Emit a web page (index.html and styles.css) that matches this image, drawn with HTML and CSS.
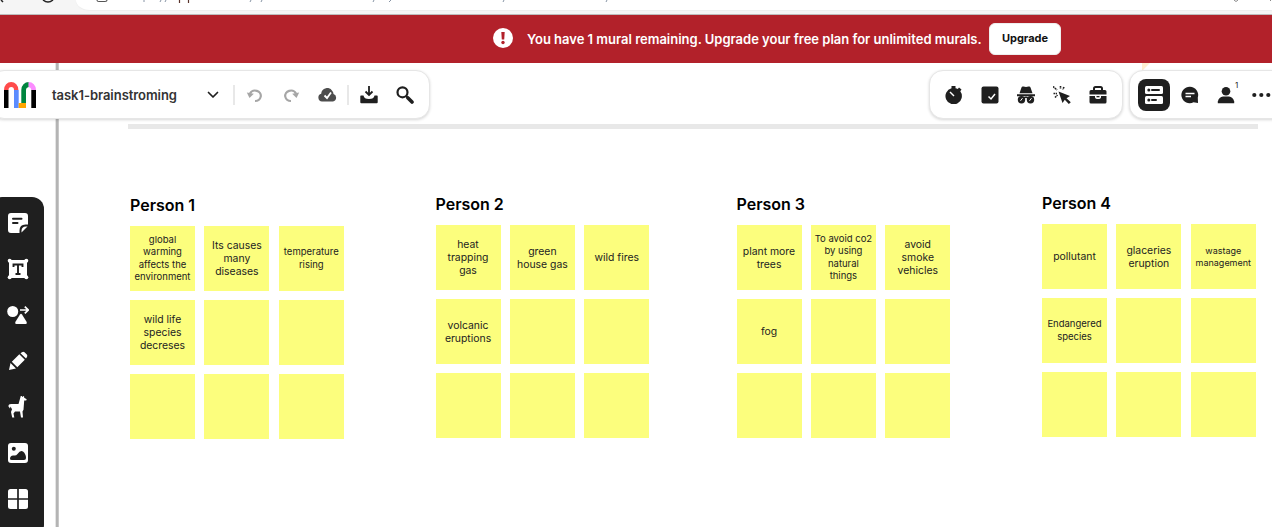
FILE: index.html
```html
<!DOCTYPE html>
<html lang="en">
<head>
<meta charset="utf-8">
<title>task1-brainstroming</title>
<link rel="stylesheet" href="styles.css">
</head>
<body>
<div class="app">
  <header class="browser">
    <div class="address"></div>
    <svg class="browser-marks" width="1272" height="8" viewBox="0 0 1272 8" fill="none">
      <path d="M1 0l2 2M43 0q5 4 10 0" stroke="#222" stroke-width="1.5"/>
      <path d="M97 0q0 1.500 2 1.500h6q2 0 2-1.500" stroke="#555" stroke-width="1.200"/>
      <path d="M144 0v2M161 0l-1 2M166 0l-1 2M251 0l-1 2M262 0l-1 2M374 0l-1 2M391 0l-2 2M504 0l-1 2M607 0l-1 2" stroke="#8794a5"/>
      <path d="M179.500 0v3M188.500 0v3" stroke="#5a342c" stroke-width="1.200"/>
      <path d="M1234 0l2 1.500 2-1.500M1270.500 0v1" stroke="#888"/>
    </svg>
  </header>

  <div class="banner">
    <svg class="alert" width="20" height="20" viewBox="0 0 20 20"><circle cx="10" cy="10" r="10" fill="#fff"/><path d="M8.300 4h3.400l-.5 7.500H8.800z" fill="#b2212a"/><circle cx="10" cy="14.500" r="1.700" fill="#b2212a"/></svg>
    <span class="banner-text">You have 1 mural remaining. Upgrade your free plan for unlimited murals.</span>
    <button class="upgrade">Upgrade</button>
  </div>

  <main class="canvas">
    <div class="frame-edge"></div>
    <div class="flag"></div>
    <div class="rule"></div>

    <section class="group g1">
      <h2>Person 1</h2>
      <div class="notes">
        <div class="note small">global<br>warming<br>affects the<br>environment</div>
        <div class="note">Its causes<br>many<br>diseases</div>
        <div class="note small">temperature<br>rising</div>
        <div class="note">wild life<br>species<br>decreses</div>
        <div class="note"></div><div class="note"></div><div class="note"></div><div class="note"></div><div class="note"></div>
      </div>
    </section>
    <section class="group g2">
      <h2>Person 2</h2>
      <div class="notes">
        <div class="note">heat<br>trapping<br>gas</div>
        <div class="note">green<br>house gas</div>
        <div class="note">wild fires</div>
        <div class="note">volcanic<br>eruptions</div>
        <div class="note"></div><div class="note"></div><div class="note"></div><div class="note"></div><div class="note"></div>
      </div>
    </section>
    <section class="group g3">
      <h2>Person 3</h2>
      <div class="notes">
        <div class="note">plant more<br>trees</div>
        <div class="note small">To avoid co2<br>by using<br>natural<br>things</div>
        <div class="note">avoid<br>smoke<br>vehicles</div>
        <div class="note">fog</div>
        <div class="note"></div><div class="note"></div><div class="note"></div><div class="note"></div><div class="note"></div>
      </div>
    </section>
    <section class="group g4">
      <h2>Person 4</h2>
      <div class="notes">
        <div class="note">pollutant</div>
        <div class="note">glaceries<br>eruption</div>
        <div class="note tiny">wastage<br>management</div>
        <div class="note small">Endangered<br>species</div>
        <div class="note"></div><div class="note"></div><div class="note"></div><div class="note"></div><div class="note"></div>
      </div>
    </section>

    <div class="panel panel-file">
      <svg class="logo" width="32" height="26" viewBox="0 0 32 26">
        <path d="M0 8h4.500v18H0zM27.300 8H32v18h-4.700z" fill="#000"/>
        <path d="M0 8a7.200 8 0 0 1 14.400 0H10a2.700 3 0 0 0-5.500 0z" fill="#ff4b4b"/>
        <path d="M10 8h4.700v18H10z" fill="#5b8cff"/>
        <path d="M17.300 21V8a7.500 8 0 0 1 7.500-8v5Q22 5.500 22 8v13z" fill="#00853f"/>
        <path d="M24.600 0A7.400 8 0 0 1 32 8h-4.700q0-2.500-2.700-3z" fill="#fb8cff"/>
        <path d="M14.700 21H22v5h-7.300z" fill="#ffa600"/>
      </svg>
      <span class="title">task1-brainstroming</span>
      <svg class="chevron" width="12" height="8" viewBox="0 0 12 8" fill="none" stroke="#1f1f1f" stroke-width="1.700" stroke-linecap="round" stroke-linejoin="round"><path d="M1.500 1.500L6 6l4.500-4.500"/></svg>
      <i class="divider"></i>
      <svg class="undo" width="18" height="16" viewBox="0 0 18 16"><path d="M4 6.500a5.700 5.200 0 1 1 5 7.500" fill="none" stroke="#a6a6a6" stroke-width="2.200"/><path d="M.8 5.500l7 1.200L3.500 11z" fill="#a6a6a6"/></svg>
      <svg class="redo" width="18" height="16" viewBox="0 0 18 16"><path d="M14 6.500a5.700 5.200 0 1 0-5 7.500" fill="none" stroke="#a6a6a6" stroke-width="2.200"/><path d="M17.200 5.500l-7 1.200 4.300 4.300z" fill="#a6a6a6"/></svg>
      <svg class="cloud" width="19" height="14" viewBox="0 0 19 14"><path d="M4 13.500a4 4 0 0 1-.8-7.800A6 6 0 0 1 14.500 3.200a4.500 4.500 0 0 1 1 2.800 3.900 3.900 0 0 1-.5 7.500z" fill="#4d4d4d"/><path d="M6.500 7.500l2.500 2.500L13 4.500" fill="none" stroke="#fff" stroke-width="1.800"/></svg>
      <i class="divider"></i>
      <svg class="download" width="18" height="18" viewBox="0 0 18 18"><path d="M9 0v9M5.500 5.500L9 9l3.500-3.500" fill="none" stroke="#1f1f1f" stroke-width="1.800"/><path d="M1 9.500h2.500q.5 3.500 5.500 3.500t5.500-3.500H17q.7 0 .7.700v6.100q0 1-1 1H1.300q-1 0-1-1v-6.100q0-.7.700-.7z" fill="#1f1f1f"/></svg>
      <svg class="search" width="18" height="18" viewBox="0 0 18 18" fill="none" stroke="#1f1f1f"><circle cx="6.500" cy="6.300" r="5" stroke-width="2.200"/><path d="M10 10l2 2" stroke-width="2.200"/><path d="M12 12l4 4" stroke-width="3.600" stroke-linecap="round"/></svg>
    </div>

    <div class="panel panel-tools">
      <svg width="18" height="18" viewBox="0 0 18 18"><path d="M6.500 0h4v2.200q1.200.2 2.300.9L14 1.500l2.500 2-1.200 1.800A8.200 8.200 0 1 1 6.500 2.200z" fill="#1f1f1f"/><path d="M5 6l4 4" stroke="#fff" stroke-width="1.500"/></svg>
      <svg width="18" height="18" viewBox="0 0 18 18"><rect x=".5" y=".5" width="17" height="17" rx="2" fill="#1f1f1f"/><path d="M7.500 10.500L10 13l4-5" fill="none" stroke="#fff" stroke-width="1.500"/></svg>
      <svg width="18" height="18" viewBox="0 0 18 18"><path d="M2.500 7.200L4.500 1.500Q5 0 6.500.6 9 1.500 11.500.6 13 0 13.500 1.500l2 5.700zM0 8.300h18v1.900H0z" fill="#1f1f1f"/><circle cx="4.500" cy="13.700" r="3.700" fill="#1f1f1f"/><circle cx="13.500" cy="13.700" r="3.700" fill="#1f1f1f"/><path d="M7 12q2-1.500 4 0" fill="none" stroke="#1f1f1f" stroke-width="1.500"/><path d="M3.500 14.800l2-2.600M12.500 14.800l2-2.600" stroke="#fff"/></svg>
      <svg width="18" height="18" viewBox="0 0 18 18"><path d="M5.500 5.500L17 10l-3.500 2.200 4.300 4-2 1.800-4-4.300L9.500 17z" fill="#1f1f1f"/><path d="M0 .5L4 4M7.500 0v3M11 1L9.800 3.500M.5 7.500H4M2 11.500L4.500 9" stroke="#1f1f1f" stroke-width="1.600" stroke-dasharray="1.800 .6"/></svg>
      <svg width="18" height="18" viewBox="0 0 18 18"><path d="M5 5V2.500Q5 1 6.500 1h5Q13 1 13 2.500V5" fill="none" stroke="#1f1f1f" stroke-width="2"/><path d="M2 4h14q1.500 0 1.500 1.500V8.500H.5v-3Q.5 4 2 4zM.5 10H6v1q0 2 3 2t3-2v-1h5.500v6q0 1.500-1.500 1.500H2Q.5 17.500.5 16z" fill="#1f1f1f"/><path d="M7.500 10h3v1.300h-3z" fill="#1f1f1f"/></svg>
    </div>

    <div class="panel panel-people">
      <div class="active">
        <svg width="18" height="18" viewBox="0 0 18 18"><rect width="18" height="8" rx="1.500" fill="#fff"/><rect y="10" width="18" height="8" rx="1.500" fill="#fff"/><path d="M7 4h7M7 14h4" stroke="#1f1f1f" stroke-width="2" stroke-linecap="round"/><circle cx="3.800" cy="4" r="1.500" fill="#1f1f1f"/><circle cx="3.800" cy="14" r="1.500" fill="#1f1f1f"/></svg>
      </div>
      <svg width="18" height="18" viewBox="0 0 18 18"><path d="M9 .8a8.200 8.200 0 0 1 7.800 10.700l.2 5.500-4.500-.8A8.200 8.200 0 1 1 9 .8z" fill="#1f1f1f"/><path d="M4.500 7.500h9M4.500 10.500H10" stroke="#fff" stroke-width="1.500"/></svg>
      <div class="person">
        <svg width="18" height="18" viewBox="0 0 18 18"><circle cx="9" cy="5.300" r="4.300" fill="#1f1f1f"/><path d="M.8 17.200v-1.700Q2 11 6 10.500h6q4 .5 5.200 5v1.700z" fill="#1f1f1f"/></svg>
        <span class="count">1</span>
      </div>
      <svg class="more" width="19" height="18" viewBox="0 0 19 18" fill="#1f1f1f"><circle cx="2.300" cy="9" r="2.100"/><circle cx="9.300" cy="9" r="2.100"/><circle cx="16.300" cy="9" r="2.100"/></svg>
    </div>

    <nav class="sidebar">
      <svg width="22" height="22" viewBox="0 0 22 22"><path d="M4 1h14q3 0 3 3v8.500h-2.500q-6 0-6 6V21H4q-3 0-3-3V4q0-3 3-3z" fill="#fff"/><path d="M6 6.700h8.500M6 11h4.500" stroke="#1f1f1f" stroke-width="2" stroke-linecap="round"/><path d="M14.500 20.500v-1.500q0-4.500 4.500-4.500h1.500z" fill="#fff"/></svg>
      <svg width="22" height="22" viewBox="0 0 22 22"><path d="M2 2h18v18H2z" fill="#fff"/><g fill="#fff"><circle cx="2.700" cy="2.700" r="2"/><circle cx="19.300" cy="2.700" r="2"/><circle cx="2.700" cy="19.300" r="2"/><circle cx="19.300" cy="19.300" r="2"/></g><path d="M6.500 9V6.500h9V9M11 6.500v9.500M8.500 16h5" fill="none" stroke="#1f1f1f" stroke-width="1.900"/></svg>
      <svg width="22" height="22" viewBox="0 0 22 22"><circle cx="5.700" cy="7.500" r="5.500" fill="#fff"/><path d="M13 6h8M17.800 2.700L21.200 6l-3.400 3.300" fill="none" stroke="#fff" stroke-width="1.700"/><path d="M13 10.500q1-1.500 2 0l4.700 7.500q.7 2-1 2h-9.400q-1.700 0-1-2z" fill="#fff"/></svg>
      <svg width="22" height="22" viewBox="0 0 22 22" fill="#fff"><path d="M2 20l1.500-7 5.500 5.500zM4.800 11.800l7.500-7.500 5.500 5.500-7.500 7.500zM13.500 3.200q2.500-2.500 4-1l2.300 2.300q1.300 1.500-.8 4z"/></svg>
      <svg width="22" height="22" viewBox="0 1 22 24" preserveAspectRatio="none" fill="#fff"><path d="M14 0l1.500 2L17 .8l.2 2.200 2.500 1.500-.5 1.500h-2l-.7 10-1 2 .5 6.500h-2l-1-6.500H8l-1.500 2 .8 4.500H5.200L4 18.500l1-3-1.500-3-.5 2-1.500-2Q1 9.700 4 9.700h7.500L13 4z"/></svg>
      <svg width="22" height="22" viewBox="0 0 22 22"><rect x="1" y="1" width="20" height="20" rx="3" fill="#fff"/><circle cx="6.800" cy="6.800" r="2" fill="#1f1f1f"/><path d="M3 17q0-4 4-3.500 2 .5 3.500-1.500 3-4.500 5.500-2.500 3 2.500 3 6.500 0 2-2 2H5q-2 0-2-1z" fill="#1f1f1f"/></svg>
      <svg width="22" height="22" viewBox="0 0 22 22"><rect x="1" y="1" width="20" height="20" rx="2.500" fill="#fff"/><path d="M11 0v22M0 11h22" stroke="#1f1f1f" stroke-width="1.700"/></svg>
    </nav>
  </main>
</div>
</body>
</html>
```

FILE: styles.css
```css
* { box-sizing: border-box; }
body { margin: 0; font-family: Inter, "Liberation Sans", sans-serif; color: #1f1f1f; }
svg { display: block; flex: none; }
.app { width: 1272px; height: 527px; display: flex; flex-direction: column; overflow: hidden; background: #fff; }

.browser { position: relative; height: 15px; flex: none; background: #f5f5f5; border-bottom: 1px solid #bdbdbd; padding-left: 76px; }
.address { height: 10px; background: #fff; border-bottom-left-radius: 14px 10px; box-shadow: 0 1px 1px #eee; }
.browser-marks { position: absolute; left: 0; top: 0; }

.banner { height: 48px; flex: none; background: #b2212a; display: flex; align-items: center; padding-left: 493px; }
.alert { margin-bottom: 3px; }
.banner-text { margin-left: 14px; width: 454px; white-space: nowrap; color: #fff; font-size: 13px; font-weight: 600; letter-spacing: -.01px; }
.upgrade { margin-left: 8px; width: 72px; height: 32px; padding: 0 0 2px; border: 1px solid #eee; border-radius: 6px; background: #fff; color: #111; font: 700 11px Inter, "Liberation Sans", sans-serif; }

.canvas { position: relative; flex: 1; overflow: hidden; }
.frame-edge { position: absolute; left: 55px; top: 0; width: 4px; height: 464px; background: #b4b4b4; border-left: 1px solid #e4e4e4; border-right: 1px solid #c8c8c8; }
.flag { position: absolute; left: 1142px; top: 0; width: 8px; height: 8px; background: #ffedcf; clip-path: polygon(0 0, 100% 0, 0 100%); }
.rule { position: absolute; left: 128px; top: 61px; width: 1130px; height: 5px; background: #e8e8e8; }

.group { position: absolute; width: 214px; }
.g1 { left: 130px; top: 132px; }
.g2 { left: 435.500px; top: 131px; }
.g3 { left: 736.500px; top: 131px; }
.g4 { left: 1042px; top: 130px; }
.group h2 { margin: 0 0 11px; height: 20px; font-size: 16px; line-height: 20px; font-weight: 600; color: #000; white-space: nowrap; }
.notes { display: grid; grid-template-columns: repeat(3, 65px); grid-auto-rows: 65px; gap: 9.200px 9.400px; }
.note { display: flex; align-items: center; justify-content: center; text-align: center; background: #fcfe7d; white-space: nowrap; font-size: 10.400px; line-height: 13px; color: #222; }
.small { font-size: 9.500px; line-height: 12.200px; }
.tiny { font-size: 9px; line-height: 12px; }

.panel { position: absolute; top: 7px; height: 49px; display: flex; align-items: center; background: #fff; border: 1px solid #e6e6e6; border-radius: 14px; box-shadow: 0 1px 3px rgba(0, 0, 0, .16); }
.panel-file { left: -10px; width: 440px; padding-left: 13px; }
.title { margin-left: 16px; width: 155px; font-size: 13px; font-weight: 600; letter-spacing: -.05px; color: #333; white-space: nowrap; }
.divider { width: 2px; height: 20px; background: #e8e8e8; }
.chevron { margin-right: 14px; }
.undo { margin-left: 10.500px; }
.redo { margin-left: 18px; }
.cloud { margin: 0 10.500px 0 18px; }
.download { margin-left: 11px; }
.search { margin-left: 18px; }
.panel-tools { left: 929px; width: 194px; padding-left: 15px; gap: 18px; }
.panel-people { left: 1129px; width: 160px; padding-left: 8px; gap: 11px; }
.active { width: 32px; height: 32px; border-radius: 8px; background: #1f1f1f; display: flex; align-items: center; justify-content: center; }
.person { position: relative; margin-left: 7px; }
.count { position: absolute; left: 18px; top: -6px; font-size: 8px; line-height: 10px; }
.more { margin-left: 6px; }

.sidebar { position: absolute; left: -10px; top: 134px; width: 54px; height: 340px; padding: 15px 0 0 17px; display: flex; flex-direction: column; gap: 24px; border-radius: 12px; background: #1f1f1f; }
```
